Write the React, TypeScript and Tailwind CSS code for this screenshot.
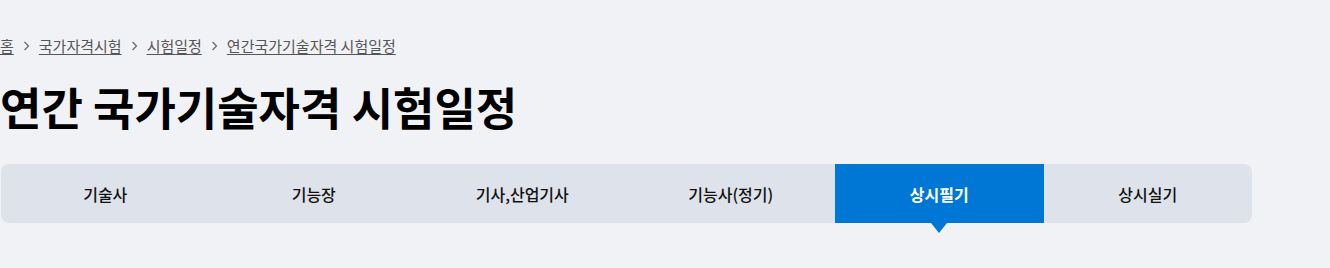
const crumbs = ["홈", "국가자격시험", "시험일정", "연간국가기술자격 시험일정"];
const tabs = ["기술사", "기능장", "기사,산업기사", "기능사(정기)", "상시필기", "상시실기"];
const activeTab = "상시필기";

export default function App() {
  return (
    <div
      className="min-h-[268px] w-full bg-[#f1f2f6] pt-[37px]"
      style={{ fontFamily: '"Noto Sans CJK KR", "Noto Sans", sans-serif' }}
    >
      {/* breadcrumb */}
      <nav className="flex h-[18px] items-center text-[15px] leading-[18px] text-[#555]">
        {crumbs.map((c, i) => (
          <div key={c} className="flex items-center">
            {i > 0 && (
              <svg width="7" height="10" viewBox="0 0 7 10" className="mx-[9px]" fill="none">
                <path d="M1.5 1 L5.5 5 L1.5 9" stroke="#666" strokeWidth="1.2" />
              </svg>
            )}
            <a href="#" className="underline underline-offset-2">
              {c}
            </a>
          </div>
        ))}
      </nav>

      {/* title */}
      <h1 className="mt-[22px] h-[60px] text-[45px] font-bold leading-[60px] text-black">
        연간 국가기술자격 시험일정
      </h1>

      {/* tabs */}
      <div className="ml-px mt-[27px] flex h-[59px] w-[1251px] rounded-[8px] bg-[#dee2ea]">
        {tabs.map((t) => {
          const active = t === activeTab;
          return (
            <button
              key={t}
              className={
                active
                  ? "relative flex flex-1 items-center justify-center bg-[#0077d4] text-[16px] font-bold text-white"
                  : "relative flex flex-1 items-center justify-center text-[16px] font-medium text-[#111]"
              }
            >
              {t}
              {active && (
                <span className="absolute left-1/2 top-full -translate-x-1/2 border-x-[8px] border-t-[10px] border-x-transparent border-t-[#0077d4]" />
              )}
            </button>
          );
        })}
      </div>
    </div>
  );
}
